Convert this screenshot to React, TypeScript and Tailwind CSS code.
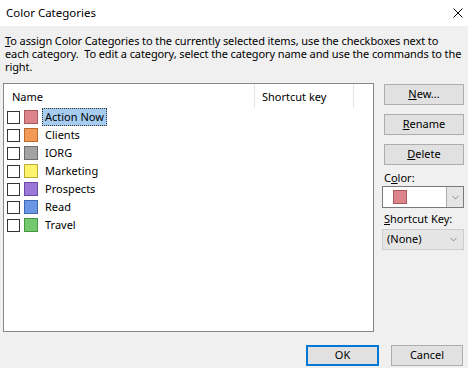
import { ChevronDown } from 'lucide-react'

type Category = {
  name: string
  fill: string
  edge: string
}

const categories: Category[] = [
  { name: 'Action Now', fill: 'bg-[#dc8489]', edge: 'border-[#a85a5e]' },
  { name: 'Clients', fill: 'bg-[#f29a55]', edge: 'border-[#b86a2f]' },
  { name: 'IORG', fill: 'bg-[#a3a3a3]', edge: 'border-[#6e6e6e]' },
  { name: 'Marketing', fill: 'bg-[#fdf36a]', edge: 'border-[#b8ad3a]' },
  { name: 'Prospects', fill: 'bg-[#9b78d8]', edge: 'border-[#6a4ca6]' },
  { name: 'Read', fill: 'bg-[#6a96e4]', edge: 'border-[#4068ad]' },
  { name: 'Travel', fill: 'bg-[#74c96e]', edge: 'border-[#4a9345]' },
]

const Button = ({ children, primary }: { children: React.ReactNode; primary?: boolean }) => (
  <button
    className={
      primary
        ? 'w-[73px] h-[21px] bg-[#e1e1e1] border-2 border-[#0078d7] flex items-center justify-center'
        : 'h-[21px] bg-[#e1e1e1] border border-[#adadad] flex items-center justify-center'
    }
  >
    {children}
  </button>
)

const Row = ({ cat, selected }: { cat: Category; selected?: boolean }) => (
  <div className="h-[18px] flex items-center">
    <div className="ml-[3px] w-[13px] h-[13px] border border-[#333333] bg-white" />
    <div className={`ml-[4px] w-[14px] h-[14px] border ${cat.fill} ${cat.edge}`} />
    {selected ? (
      <span className="ml-[4px] h-[18px] px-[2px] flex items-center bg-[#a6cdf0] border border-dotted border-[#333333]">
        {cat.name}
      </span>
    ) : (
      <span className="ml-[7px]">{cat.name}</span>
    )}
  </div>
)

export default function App() {
  return (
    <div className="w-[468px] h-[368px] bg-[#f0f0f0] text-[11px] text-black font-['Segoe_UI','Noto_Sans',sans-serif] flex flex-col overflow-hidden">
      <div className="h-[26px] bg-white flex items-center justify-between pl-[6px] pr-[5px]">
        <span className="text-[11.5px]">Color Categories</span>
        <svg width="10" height="10" viewBox="0 0 10 10">
          <path d="M0.5 0.5 L9.5 9.5 M9.5 0.5 L0.5 9.5" stroke="#000" strokeWidth="1" />
        </svg>
      </div>

      <div className="pt-[8px] pl-[5px] leading-[13px] whitespace-pre tracking-[-0.1px]">
        <div>
          <u>T</u>o assign Color Categories to the currently selected items, use the checkboxes next to
        </div>
        <div>each category.  To edit a category, select the category name and use the commands to the</div>
        <div>right.</div>
      </div>

      <div className="mt-[10px] flex">
        <div className="ml-[3px] w-[371px] h-[249px] border border-[#828790] bg-white flex flex-col">
          <div className="h-[24px] flex">
            <div className="w-[250px] pl-[8px] flex items-center pt-[2px]">Name</div>
            <div className="w-[100px] pl-[7px] flex items-center pt-[2px] border-l border-r border-[#e5e5e5]">
              Shortcut key
            </div>
          </div>
          {categories.map((c, i) => (
            <Row key={c.name} cat={c} selected={i === 0} />
          ))}
        </div>

        <div className="ml-[10px] w-[80px] flex flex-col">
          <div className="mt-[1px] flex flex-col gap-[9px]">
            <Button>
              <u>N</u>ew...
            </Button>
            <Button>
              <u>R</u>ename
            </Button>
            <Button>
              <u>D</u>elete
            </Button>
          </div>
          <div className="mt-[6px] h-[14px] leading-[14px]">
            C<u>o</u>lor:
          </div>
          <div className="mt-[1px] -ml-[2px] w-[82px] h-[22px] bg-white border border-[#7a7a7a] flex">
            <div className="flex-1 flex items-center pl-[10px]">
              <div className="w-[14px] h-[14px] bg-[#dc8489] border border-[#a85a5e]" />
            </div>
            <div className="w-[17px] bg-[#e5e5e5] border-l border-[#adadad] flex items-center justify-center">
              <ChevronDown size={11} strokeWidth={1.2} color="#444" />
            </div>
          </div>
          <div className="mt-[4px] h-[14px] leading-[14px]">
            <u>S</u>hortcut Key:
          </div>
          <div className="mt-[3px] -ml-[2px] w-[82px] h-[21px] bg-[#e5e5e5] border border-[#cccccc] flex items-center justify-between pl-[4px] pr-[4px]">
            <span>(None)</span>
            <ChevronDown size={11} strokeWidth={1.2} color="#444" />
          </div>
        </div>
      </div>

      <div className="mt-[13px] flex justify-end pr-[5px] gap-[12px]">
        <Button primary>OK</Button>
        <div className="w-[72px] flex flex-col">
          <Button>Cancel</Button>
        </div>
      </div>
    </div>
  )
}
